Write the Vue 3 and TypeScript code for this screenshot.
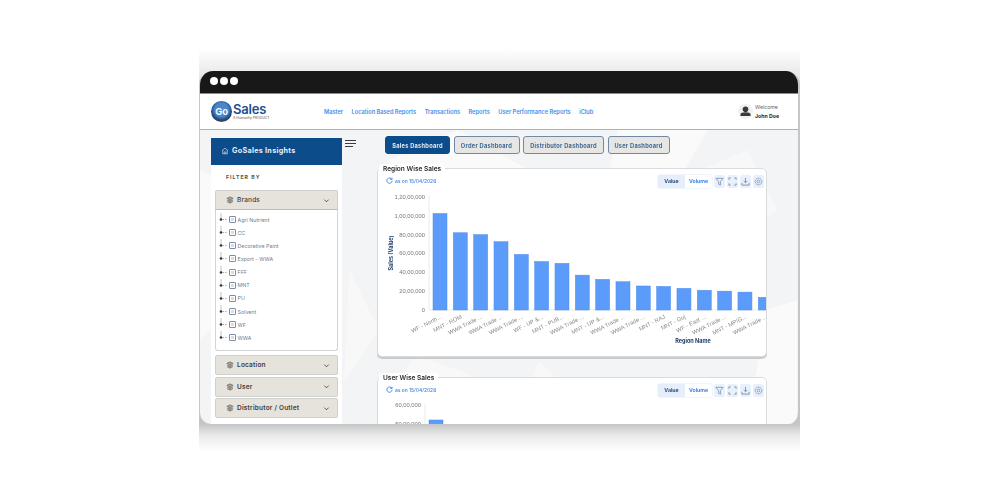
<script setup lang="ts">
const navLinks = ['Master', 'Location Based Reports', 'Transactions', 'Reports', 'User Performance Reports', 'iClub']
const tabs = ['Sales Dashboard', 'Order Dashboard', 'Distributor Dashboard', 'User Dashboard']
const brands = ['Agri Nutrient', 'CC', 'Decorative Paint', 'Export - WWA', 'FFF', 'MNT', 'PU', 'Solvent', 'WF', 'WWA']
const filters = ['Location', 'User', 'Distributor / Outlet']

const regions = [
  { name: 'WF - North...', lakh: 102.5 },
  { name: 'MNT - ROM', lakh: 82 },
  { name: 'WWA Trade ...', lakh: 80 },
  { name: 'WWA Trade ...', lakh: 72.5 },
  { name: 'WWA Trade ...', lakh: 59 },
  { name: 'WF - UP &...', lakh: 51.5 },
  { name: 'MNT - PUB...', lakh: 49.5 },
  { name: 'WWA Trade ...', lakh: 37 },
  { name: 'MNT - UP &...', lakh: 32.5 },
  { name: 'WWA Trade ...', lakh: 30 },
  { name: 'WWA Trade ...', lakh: 25.5 },
  { name: 'MNT - RAJ', lakh: 25 },
  { name: 'MNT - Guj', lakh: 23 },
  { name: 'WF - East ...', lakh: 21 },
  { name: 'WWA Trade ...', lakh: 20 },
  { name: 'MNT - MP/G...', lakh: 19 },
  { name: 'WWA Trade ...', lakh: 13.5 },
  { name: 'MNT', lakh: 12 },
]
const yTicks = ['0', '20,00,000', '40,00,000', '60,00,000', '80,00,000', '1,00,00,000', '1,20,00,000']

const baseY = 122
const pxPerLakh = 0.942
const barX = (i: number) => 55 + i * 20.33
const barH = (lakh: number) => lakh * pxPerLakh
</script>

<template>
  <div class="page">
    <div class="shade shade-top" />
    <div class="frame">
      <div class="titlebar">
        <i /><i /><i />
      </div>

      <header class="topbar">
        <div class="logo">
          <div class="logo-ball"><span>Go</span></div>
          <div class="logo-words">
            <b>Sales</b>
            <small>A Humsofty PRODUCT</small>
          </div>
        </div>
        <nav class="nav">
          <a v-for="link in navLinks" :key="link">{{ link }}</a>
        </nav>
        <div class="user">
          <svg class="avatar" viewBox="0 0 16 16">
            <circle cx="8" cy="8" r="8" fill="#f1f1f1" />
            <circle cx="8" cy="5.6" r="3" fill="#3a3a3a" />
            <path d="M2.6 11.2c0-1.7 2-2.4 5.4-2.4s5.4.7 5.4 2.4v1.6H2.6z" fill="#3a3a3a" />
          </svg>
          <div class="user-text">
            <span>Welcome</span>
            <b>John Doe</b>
          </div>
        </div>
      </header>

      <div class="body">
        <svg class="backdrop" viewBox="0 0 601 294" preserveAspectRatio="none">
          <path d="M260 0l70 40-30 50h-90l-20-60zM420 0h90l-40 70-60-20zM0 40l60 30-40 120-20 20zM570 180l30-10v124h-50z" fill="#fafafb" />
          <path d="M215 225l-35 69h110l-20-50zM340 230l60 64h-80zM150 140l30 60-35 50zM480 50l70-30 30 60-60 40z" fill="#f8f8f9" />
        </svg>

        <aside class="sidebar">
          <div class="side-head">
            <svg viewBox="0 0 12 12" class="home-icon">
              <path d="M1.5 5.6 6 1.8l4.5 3.8M2.6 5v5.2h6.800V5M4.800 10.200V7.400h2.400v2.800" fill="none" stroke="#d7e3f0" stroke-width="1" />
            </svg>
            GoSales Insights
          </div>
          <div class="side-body">
            <div class="filter-label">FILTER BY</div>

            <div class="acc acc-open">
              <svg viewBox="0 0 10 10" class="layers">
                <path d="M5 1 9 3 5 5 1 3zM1.200 5 5 7l3.800-2M1.200 7 5 9l3.800-2" fill="#a5a49f" stroke="#55544f" stroke-width=".7" />
              </svg>
              <span>Brands</span>
              <svg viewBox="0 0 8 8" class="chev"><path d="M1.500 3 4 5.500 6.500 3" fill="none" stroke="#444" stroke-width="1" /></svg>
            </div>
            <ul class="tree">
              <li v-for="brand in brands" :key="brand">
                <svg viewBox="0 0 8 13" class="branch">
                  <path d="M2 .5v5" stroke="#555" stroke-width=".7" stroke-dasharray="1 1" />
                  <circle cx="2" cy="6.500" r="1.300" fill="#333" />
                  <path d="M3.500 6.500H8" stroke="#888" stroke-width=".7" stroke-dasharray="1.500 1" />
                </svg>
                <span class="check"><i /></span>
                {{ brand }}
              </li>
            </ul>

            <div v-for="item in filters" :key="item" class="acc">
              <svg viewBox="0 0 10 10" class="layers">
                <path d="M5 1 9 3 5 5 1 3zM1.200 5 5 7l3.800-2M1.200 7 5 9l3.800-2" fill="#a5a49f" stroke="#55544f" stroke-width=".7" />
              </svg>
              <span>{{ item }}</span>
              <svg viewBox="0 0 8 8" class="chev"><path d="M1.500 3 4 5.500 6.500 3" fill="none" stroke="#444" stroke-width="1" /></svg>
            </div>
          </div>
        </aside>

        <div class="burger"><i /><i /><i class="short" /></div>

        <main class="main">
          <div class="tabs">
            <button v-for="(tab, i) in tabs" :key="tab" class="tab" :class="{ active: i === 0 }">{{ tab }}</button>
          </div>

          <section class="card card-region">
            <h3 class="card-title">Region Wise Sales</h3>
            <div class="card-head">
              <div class="as-on">
                <svg viewBox="0 0 10 10"><path d="M8.300 3.200A3.800 3.800 0 1 0 8.800 5.600M8.600 1v2.500H6.100" fill="none" stroke="#2f7fe6" stroke-width="1.200" /></svg>
                as on 15/04/2026
              </div>
              <div class="tools">
                <div class="switch"><span class="on">Value</span><span>Volume</span></div>
                <span class="tool"><svg viewBox="0 0 10 10"><path d="M1 1.500h8L6 5.200V9L4 8V5.200z" fill="none" stroke="#6f86a6" stroke-width=".8" /></svg></span>
                <span class="tool"><svg viewBox="0 0 10 10"><path d="M1 3V1h2M7 1h2v2M9 7v2H7M3 9H1V7" fill="none" stroke="#6f86a6" stroke-width=".9" /></svg></span>
                <span class="tool"><svg viewBox="0 0 10 10"><path d="M5 1v5.200M3 4.400 5 6.400l2-2M1 6.500V9h8V6.500" fill="none" stroke="#6f86a6" stroke-width=".9" /></svg></span>
                <span class="tool"><svg viewBox="0 0 10 10"><circle cx="5" cy="5" r="3.700" fill="none" stroke="#6f86a6" stroke-width=".9" stroke-dasharray="1.800 .5" /><circle cx="5" cy="5" r="1.500" fill="none" stroke="#6f86a6" stroke-width=".8" /></svg></span>
              </div>
            </div>

            <svg class="chart" width="388" height="166" viewBox="0 0 388 166">
              <path :d="`M51 8V${baseY}H388`" fill="none" stroke="#e9ebee" stroke-width="1" />
              <text
                v-for="(tick, i) in yTicks"
                :key="tick"
                x="47"
                :y="baseY + 2 - i * 18.84"
                text-anchor="end"
                class="tick"
              >{{ tick }}</text>
              <text class="axis-title" transform="translate(15 65) rotate(-90)" text-anchor="middle">Sales (Value)</text>
              <rect
                v-for="(r, i) in regions"
                :key="i"
                :x="barX(i)"
                :y="baseY - barH(r.lakh)"
                width="14"
                :height="barH(r.lakh)"
                class="bar"
              />
              <text
                v-for="(r, i) in regions"
                :key="'l' + i"
                class="cat"
                text-anchor="end"
                :transform="`translate(${barX(i) + 9} ${baseY + 8}) rotate(-27)`"
              >{{ r.name }}</text>
              <text class="axis-title" x="315" y="155" text-anchor="middle">Region Name</text>
            </svg>
          </section>

          <section class="card card-user">
            <h3 class="card-title">User Wise Sales</h3>
            <div class="card-head">
              <div class="as-on">
                <svg viewBox="0 0 10 10"><path d="M8.300 3.200A3.800 3.800 0 1 0 8.800 5.600M8.600 1v2.500H6.100" fill="none" stroke="#2f7fe6" stroke-width="1.200" /></svg>
                as on 15/04/2026
              </div>
              <div class="tools">
                <div class="switch"><span class="on">Value</span><span>Volume</span></div>
                <span class="tool"><svg viewBox="0 0 10 10"><path d="M1 1.500h8L6 5.200V9L4 8V5.200z" fill="none" stroke="#6f86a6" stroke-width=".8" /></svg></span>
                <span class="tool"><svg viewBox="0 0 10 10"><path d="M1 3V1h2M7 1h2v2M9 7v2H7M3 9H1V7" fill="none" stroke="#6f86a6" stroke-width=".9" /></svg></span>
                <span class="tool"><svg viewBox="0 0 10 10"><path d="M5 1v5.200M3 4.400 5 6.400l2-2M1 6.500V9h8V6.500" fill="none" stroke="#6f86a6" stroke-width=".9" /></svg></span>
                <span class="tool"><svg viewBox="0 0 10 10"><circle cx="5" cy="5" r="3.700" fill="none" stroke="#6f86a6" stroke-width=".9" stroke-dasharray="1.800 .5" /><circle cx="5" cy="5" r="1.500" fill="none" stroke="#6f86a6" stroke-width=".8" /></svg></span>
              </div>
            </div>
            <svg class="chart" width="388" height="60" viewBox="0 0 388 60">
              <path d="M47 7V60" fill="none" stroke="#e9ebee" stroke-width="1" />
              <text x="43" y="10" text-anchor="end" class="tick">60,00,000</text>
              <text x="43" y="28.500" text-anchor="end" class="tick">50,00,000</text>
              <rect x="51" y="23" width="14" height="37" class="bar" />
            </svg>
          </section>
        </main>
      </div>
    </div>
    <div class="shade shade-bottom" />
  </div>
</template>

<style>
html,
body {
  margin: 0;
  background: #fff;
}
</style>

<style scoped>
.page {
  width: 1000px;
  height: 500px;
  overflow: hidden;
  padding: 48px 0 0 199px;
  box-sizing: border-box;
  font-family: Inter, 'Liberation Sans', sans-serif;
}

.shade {
  width: 601px;
}

.shade-top {
  height: 23px;
  margin-bottom: -12px;
  padding-bottom: 12px;
  background: linear-gradient(#fff, #e2e2e2);
}

.shade-bottom {
  height: 40px;
  margin-top: -12px;
  background: linear-gradient(#c4c5c6 30%, #ebebeb 60%, #fff);
}

.frame {
  position: relative;
  width: 601px;
  height: 353px;
  border-radius: 14px 14px 12px 12px;
  overflow: hidden;
  background: #f3f4f5;
  display: flex;
  flex-direction: column;
  box-sizing: border-box;
  border-left: 1px solid #c4c7ca;
  border-right: 2px solid #c4c7ca;
  filter: blur(0.45px);
}

.titlebar {
  height: 23px;
  flex: none;
  box-sizing: border-box;
  background: #181818;
  display: flex;
  align-items: center;
  gap: 2px;
  padding: 0 0 2px 10px;
  border-bottom: 1px solid #4b9be8;
}

.titlebar i {
  width: 8px;
  height: 8px;
  border-radius: 50%;
  background: #fff;
}

.topbar {
  height: 36px;
  flex: none;
  box-sizing: border-box;
  background: #fff;
  border-bottom: 1px solid #7cc0f0;
  display: flex;
  align-items: center;
  padding-left: 11px;
}

.logo {
  display: flex;
  align-items: center;
  width: 113px;
  flex: none;
}

.logo-ball {
  width: 21px;
  height: 21px;
  border-radius: 50%;
  flex: none;
  background: radial-gradient(circle at 50% 42%, #4a86c8 0 42%, #1c4f8e 62%, #3a3f47 70%, #9a9a9a 100%);
  display: flex;
  align-items: center;
  justify-content: center;
}

.logo-ball span {
  color: #f2f6fb;
  font-size: 9.500px;
  font-weight: 700;
  letter-spacing: -0.2px;
}

.logo-words {
  display: flex;
  flex-direction: column;
  margin-left: 1px;
}

.logo-words b {
  font-size: 13px;
  line-height: 13px;
  color: #1c4f8e;
  font-weight: 600;
  letter-spacing: -0.2px;
}

.logo-words small {
  font-size: 3.400px;
  line-height: 4px;
  color: #555;
  white-space: nowrap;
}

.nav {
  display: flex;
  gap: 8.500px;
  flex: none;
}

.nav a {
  color: #3d8fee;
  font-size: 5.650px;
  font-weight: 600;
  white-space: nowrap;
}

.user {
  margin-left: auto;
  margin-right: 19px;
  display: flex;
  align-items: center;
  gap: 2px;
}

.avatar {
  width: 15px;
  height: 15px;
}

.user-text {
  display: flex;
  flex-direction: column;
  font-size: 5.200px;
  line-height: 9px;
  color: #666;
}

.user-text b {
  color: #2a2a2a;
  font-weight: 700;
}

.body {
  position: relative;
  flex: 1;
  min-height: 0;
  display: grid;
  grid-template-columns: 131px 35px 390px;
  align-items: start;
  padding: 6px 0 0 11px;
  overflow: hidden;
}

.backdrop {
  position: absolute;
  inset: 0;
  width: 100%;
  height: 100%;
}

.sidebar,
.burger,
.main {
  position: relative;
}

.sidebar {
  margin-top: 2px;
  height: 300px;
  background: #fff;
}

.side-head {
  height: 27px;
  box-sizing: border-box;
  padding: 0 0 2px 10px;
  background: #0d4c8b;
  color: #e8eff7;
  font-size: 7.200px;
  font-weight: 700;
  letter-spacing: 0.3px;
  display: flex;
  align-items: center;
  gap: 3px;
}

.home-icon {
  width: 8px;
  height: 8px;
}

.side-body {
  padding: 0 4px;
}

.filter-label {
  font-size: 5.200px;
  font-weight: 700;
  letter-spacing: 1px;
  color: #555;
  padding-left: 11px;
  height: 25px;
  line-height: 25px;
}

.acc {
  height: 20px;
  box-sizing: border-box;
  background: #e6e3dc;
  border: 1px solid #cfd0cc;
  border-radius: 2px;
  display: flex;
  align-items: center;
  padding: 0 7px 0 10px;
  margin-bottom: 1.500px;
  font-size: 6.500px;
  font-weight: 600;
  letter-spacing: 0.2px;
  color: #3d3d3d;
}

.acc-open {
  margin-bottom: 0;
  border-radius: 2px 2px 0 0;
  border-bottom-color: #bdbdb6;
  font-weight: 500;
}

.acc span {
  margin-left: 3px;
}

.layers {
  width: 8px;
  height: 8px;
  flex: none;
}

.chev {
  width: 7px;
  height: 7px;
  margin-left: auto;
}

.tree {
  list-style: none;
  margin: 0 0 4px;
  padding: 3px 0 7px 2px;
  height: 141px;
  box-sizing: border-box;
  border: 1px solid #d2d4d6;
  border-top: 0;
  border-radius: 0 0 3px 3px;
  background: #fff;
}

.tree li {
  height: 13.150px;
  display: flex;
  align-items: center;
  font-size: 5.300px;
  font-weight: 400;
  color: #74808e;
}

.branch {
  width: 8px;
  height: 13px;
  flex: none;
  margin-left: 1px;
}

.check {
  width: 7px;
  height: 7px;
  box-sizing: border-box;
  border: 1px solid #7d8da5;
  border-radius: 1px;
  margin: 0 1.500px 0 2px;
  padding: 1px;
  display: block;
}

.check i {
  display: block;
  width: 100%;
  height: 100%;
  background: #d9dde3;
}

.burger {
  margin-top: 4px;
  padding-left: 3px;
  display: flex;
  flex-direction: column;
  gap: 1.600px;
}

.burger i {
  display: block;
  width: 11px;
  height: 1.300px;
  background: #3c3c3c;
}

.burger .short {
  width: 8px;
}

.tabs {
  display: flex;
  gap: 3.500px;
  padding-left: 8px;
  height: 18px;
}

.tab {
  height: 18px;
  padding: 0;
  box-sizing: border-box;
  border: 1.300px solid #7189a5;
  border-radius: 3px;
  background: #e6e6e4;
  color: #3f6893;
  font-family: inherit;
  font-size: 5.700px;
  font-weight: 700;
  letter-spacing: 0.25px;
  width: 66px;
  white-space: nowrap;
}

.tab:nth-child(3) {
  width: 81px;
}

.tab:nth-child(4) {
  width: 62px;
}

.tab.active {
  width: 65px;
  background: #0d4c8b;
  border-color: #0d4c8b;
  color: #e3ecf5;
}

.card {
  position: relative;
  box-sizing: border-box;
  background: #fff;
  border: 1px solid #d9dbdd;
  border-radius: 5px;
  box-shadow: 0 2px 0 #c9cbcc;
}

.card-region {
  margin-top: 14px;
  height: 189px;
}

.card-user {
  margin-top: 20px;
  height: 120px;
}

.card-title {
  position: absolute;
  left: 1px;
  top: -5px;
  margin: 0;
  padding: 0 4px 1px;
  background: #fff;
  border-radius: 4px 4px 0 0;
  font-size: 6.550px;
  line-height: 11px;
  font-weight: 600;
  color: #2b2b2b;
  white-space: nowrap;
}

.card-head {
  height: 14px;
  margin-top: 5px;
  padding: 0 2px 0 8px;
  display: flex;
  justify-content: space-between;
  align-items: center;
}

.as-on {
  display: flex;
  align-items: center;
  gap: 2px;
  font-size: 4.900px;
  font-weight: 500;
  color: #3f86e6;
  margin-top: -1px;
  white-space: nowrap;
}

.as-on svg {
  width: 7px;
  height: 7px;
}

.tools {
  display: flex;
  align-items: center;
  gap: 2px;
}

.switch {
  display: flex;
  height: 13px;
  background: #fff;
  border-radius: 2px;
  box-shadow: 0 0 0 0.500px #e3ecf8;
  font-size: 5.200px;
  font-weight: 700;
  color: #3f86e6;
}

.switch span {
  width: 27px;
  display: flex;
  align-items: center;
  justify-content: center;
}

.switch .on {
  background: #e5eefa;
  color: #2d4f78;
}

.tool {
  width: 11px;
  height: 13px;
  background: #e8f0fb;
  border-radius: 2px;
  display: flex;
  align-items: center;
  justify-content: center;
}

.tool svg {
  width: 9px;
  height: 9px;
}

.chart {
  display: block;
  overflow: hidden;
}

.tick {
  font-family: 'Liberation Sans', sans-serif;
  font-size: 5.800px;
  fill: #777;
}

.cat {
  font-family: 'Liberation Sans', sans-serif;
  font-size: 5.800px;
  fill: #8a8a8a;
}

.axis-title {
  font-size: 5.500px;
  font-weight: 700;
  fill: #1d3f6b;
}

.bar {
  fill: #5b9bfa;
  stroke: #4d8df0;
  stroke-width: 0.5;
}
</style>
